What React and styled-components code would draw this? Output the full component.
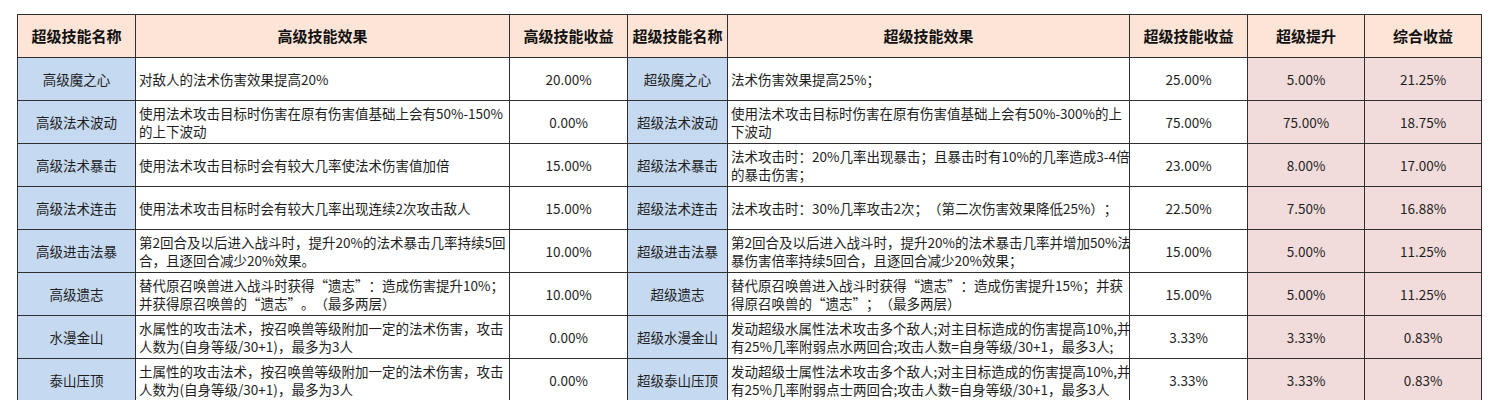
import React from "react";
import styled, { createGlobalStyle } from "styled-components";

const Global = createGlobalStyle`
  html, body { margin: 0; padding: 0; background: #ffffff; }
  body {
    font-family: "Noto Sans CJK SC", "Noto Sans", sans-serif;
    color: #1e1e1e;
    overflow: hidden;
    text-spacing-trim: space-all;
  }
`;

const Page = styled.div`
  padding: 14px 0 0 17px;
  width: 1497px;
  height: 400px;
  box-sizing: border-box;
`;

const Sheet = styled.table`
  border-collapse: collapse;
  table-layout: fixed;
  width: 1465px;
  font-size: 13.5px;
  line-height: 18px;
`;

const HeadCell = styled.th`
  background: #fce4d6;
  border: 1px solid #2f2f2f;
  height: 42px;
  padding: 0;
  font-size: 15px;
  font-weight: 700;
  color: #111;
  text-align: center;
  vertical-align: middle;
  white-space: nowrap;
`;

const tones = {
  plain: "#ffffff",
  name: "#c5d9f1",
  gain: "#f2dcdb",
};

const Cell = styled.td`
  background: ${(p) => tones[p.$tone || "plain"]};
  border: 1px solid #2f2f2f;
  height: 42px;
  padding: 0 ${(p) => (p.$text ? "3px" : "0")};
  text-align: ${(p) => (p.$text ? "left" : "center")};
  vertical-align: middle;
  white-space: nowrap;
  overflow: hidden;
`;

const Line = styled.div`
  white-space: nowrap;
  text-spacing-trim: space-all;
`;

const Wide = styled.span`
  display: inline-block;
  width: 1em;
  text-align: ${(p) => (p.$open ? "right" : "left")};
`;

const widths = [118, 374, 118, 100, 402, 118, 117, 117];
const headers = [
  "超级技能名称",
  "高级技能效果",
  "高级技能收益",
  "超级技能名称",
  "超级技能效果",
  "超级技能收益",
  "超级提升",
  "综合收益",
];

const rows = [
  {
    a: "高级魔之心",
    ae: ["对敌人的法术伤害效果提高20%"],
    ag: "20.00%",
    s: "超级魔之心",
    se: ["法术伤害效果提高25%；"],
    sg: "25.00%",
    up: "5.00%",
    total: "21.25%",
  },
  {
    a: "高级法术波动",
    ae: ["使用法术攻击目标时伤害在原有伤害值基础上会有50%-150%", "的上下波动"],
    ag: "0.00%",
    s: "超级法术波动",
    se: ["使用法术攻击目标时伤害在原有伤害值基础上会有50%-300%的上", "下波动"],
    sg: "75.00%",
    up: "75.00%",
    total: "18.75%",
  },
  {
    a: "高级法术暴击",
    ae: ["使用法术攻击目标时会有较大几率使法术伤害值加倍"],
    ag: "15.00%",
    s: "超级法术暴击",
    se: ["法术攻击时：20%几率出现暴击；且暴击时有10%的几率造成3-4倍", "的暴击伤害；"],
    sg: "23.00%",
    up: "8.00%",
    total: "17.00%",
  },
  {
    a: "高级法术连击",
    ae: ["使用法术攻击目标时会有较大几率出现连续2次攻击敌人"],
    ag: "15.00%",
    s: "超级法术连击",
    se: ["法术攻击时：30%几率攻击2次；（第二次伤害效果降低25%）；"],
    sg: "22.50%",
    up: "7.50%",
    total: "16.88%",
  },
  {
    a: "高级进击法暴",
    ae: ["第2回合及以后进入战斗时，提升20%的法术暴击几率持续5回", "合，且逐回合减少20%效果。"],
    ag: "10.00%",
    s: "超级进击法暴",
    se: ["第2回合及以后进入战斗时，提升20%的法术暴击几率并增加50%法", "暴伤害倍率持续5回合，且逐回合减少20%效果；"],
    sg: "15.00%",
    up: "5.00%",
    total: "11.25%",
  },
  {
    a: "高级遗志",
    ae: ["替代原召唤兽进入战斗时获得“遗志”：造成伤害提升10%；", "并获得原召唤兽的“遗志”。（最多两层）"],
    ag: "10.00%",
    s: "超级遗志",
    se: ["替代原召唤兽进入战斗时获得“遗志”：造成伤害提升15%；并获", "得原召唤兽的“遗志”；（最多两层）"],
    sg: "15.00%",
    up: "5.00%",
    total: "11.25%",
  },
  {
    a: "水漫金山",
    ae: ["水属性的攻击法术，按召唤兽等级附加一定的法术伤害，攻击", "人数为(自身等级/30+1)，最多为3人"],
    ag: "0.00%",
    s: "超级水漫金山",
    se: ["发动超级水属性法术攻击多个敌人;对主目标造成的伤害提高10%,并", "有25%几率附弱点水两回合;攻击人数=自身等级/30+1，最多3人;"],
    sg: "3.33%",
    up: "3.33%",
    total: "0.83%",
  },
  {
    a: "泰山压顶",
    ae: ["土属性的攻击法术，按召唤兽等级附加一定的法术伤害，攻击", "人数为(自身等级/30+1)，最多为3人"],
    ag: "0.00%",
    s: "超级泰山压顶",
    se: ["发动超级士属性法术攻击多个敌人;对主目标造成的伤害提高10%,并", "有25%几率附弱点士两回合;攻击人数=自身等级/30+1，最多3人"],
    sg: "3.33%",
    up: "3.33%",
    total: "0.83%",
  },
];

// Curly quotes take a full em, as they do in the sheet's CJK font.
const renderText = (t) =>
  t.split(/([“”])/).map((part, i) =>
    part === "“" || part === "”" ? (
      <Wide key={i} $open={part === "“"}>
        {part}
      </Wide>
    ) : (
      part
    )
  );

const Lines = ({ items }) =>
  items.map((t, i) => <Line key={i}>{renderText(t)}</Line>);

export default function App() {
  return (
    <Page lang="zh-CN">
      <Global />
      <Sheet>
        <colgroup>
          {widths.map((w, i) => (
            <col key={i} style={{ width: w }} />
          ))}
        </colgroup>
        <thead>
          <tr>
            {headers.map((h, i) => (
              <HeadCell key={i}>{h}</HeadCell>
            ))}
          </tr>
        </thead>
        <tbody>
          {rows.map((r, i) => (
            <tr key={i}>
              <Cell $tone="name">{r.a}</Cell>
              <Cell $text>
                <Lines items={r.ae} />
              </Cell>
              <Cell>{r.ag}</Cell>
              <Cell $tone="name">{r.s}</Cell>
              <Cell $text>
                <Lines items={r.se} />
              </Cell>
              <Cell>{r.sg}</Cell>
              <Cell $tone="gain">{r.up}</Cell>
              <Cell $tone="gain">{r.total}</Cell>
            </tr>
          ))}
        </tbody>
      </Sheet>
    </Page>
  );
}
